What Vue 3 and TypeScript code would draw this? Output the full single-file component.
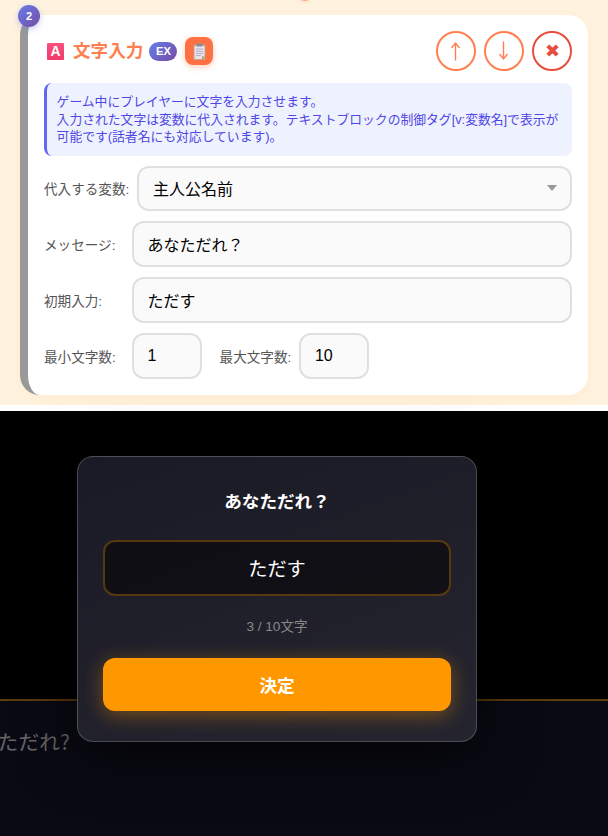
<script setup lang="ts">
import { ref } from 'vue'

const speech = ref('あなただれ?')
const prompt = ref('あなただれ？')
const initial = ref('ただす')
const minLen = ref(1)
const maxLen = ref(10)
const infoLines = [
  'ゲーム中にプレイヤーに文字を入力させます。',
  '入力された文字は変数に代入されます。テキストブロックの制御タグ[v:変数名]で表示が可能です(話者名にも対応しています)。',
]
</script>

<template>
  <div class="page">
    <section class="editor">
      <span class="connector"></span>
      <article class="card">
        <span class="step">2</span>
        <header class="head">
          <div class="head-left">
            <span class="emoji-a">A</span>
            <h2 class="title">文字入力</h2>
            <span class="ex">EX</span>
            <button class="clip" type="button" aria-label="コピー">
              <svg width="13" height="17" viewBox="0 0 13 17">
                <rect x="0.5" y="1.5" width="12" height="15.5" rx="1" fill="#c9a27c" />
                <path d="M1.5 3h10v10.5L9 16H1.5z" fill="#e8e2ee" />
                <path d="M9 16l2.5-2.5H9z" fill="#b98a5e" />
                <rect x="3.5" y="0.5" width="6" height="3" rx="0.7" fill="#8f8a96" />
                <path d="M3 6h7M3 8.2h7M3 10.4h7M3 12.6h5" stroke="#b3a9bd" stroke-width="0.9" fill="none" />
              </svg>
            </button>
          </div>
          <div class="head-right">
            <button class="round" type="button" aria-label="上へ">
              <svg width="10" height="20" viewBox="0 0 10 20">
                <path d="M4.5 19.5V2M0.5 7L4.5 2l4 5" fill="none" stroke="#ff7f50" stroke-width="1.4" />
              </svg>
            </button>
            <button class="round" type="button" aria-label="下へ">
              <svg width="10" height="20" viewBox="0 0 10 20">
                <path d="M4.5 0.5V18M0.5 13L4.5 18l4-5" fill="none" stroke="#ff7f50" stroke-width="1.4" />
              </svg>
            </button>
            <button class="round danger" type="button">✖</button>
          </div>
        </header>
        <div class="info">
          <div v-for="line in infoLines" :key="line">{{ line }}</div>
        </div>
        <div class="row">
          <label class="label">代入する変数:</label>
          <div class="field select">主人公名前<span class="caret"></span></div>
        </div>
        <div class="row">
          <label class="label wide">メッセージ:</label>
          <input class="field" v-model="prompt" />
        </div>
        <div class="row">
          <label class="label wide">初期入力:</label>
          <input class="field" v-model="initial" />
        </div>
        <div class="row last">
          <label class="label wide">最小文字数:</label>
          <input class="field num" v-model="minLen" />
          <label class="label second">最大文字数:</label>
          <input class="field num" v-model="maxLen" />
        </div>
      </article>
    </section>
    <section class="game">
      <div class="sky"></div>
      <div class="dialog">
        <p class="speech">{{ speech }}</p>
      </div>
      <div class="modal">
        <h3 class="modal-title">{{ prompt }}</h3>
        <input class="modal-input" v-model="initial" />
        <div class="count">3 / 10文字</div>
        <button class="submit" type="button">決定</button>
      </div>
    </section>
  </div>
</template>

<style>
html, body { margin: 0; background: #fff; }
</style>

<style scoped>
.page {
  width: 608px;
  height: 836px;
  overflow: hidden;
  display: flex;
  flex-direction: column;
  gap: 6px;
  font-family: "Liberation Sans", "Noto Sans CJK JP", sans-serif;
  background: #fff;
}
.editor {
  position: relative;
  height: 405px;
  box-sizing: border-box;
  padding: 15px 20px 10px;
  background: #fff3e0;
  overflow: hidden;
}
.connector {
  position: absolute;
  left: 298px;
  top: -13px;
  width: 14px;
  height: 14px;
  border-radius: 50%;
  background: #ffa98a;
  box-shadow: 0 0 4px rgba(255, 127, 80, 0.3);
}
.card {
  position: relative;
  box-sizing: border-box;
  height: 380px;
  padding: 16px;
  background: #fff;
  border-left: 8px solid #999;
  border-radius: 20px;
  box-shadow: 0 4px 16px rgba(255, 152, 0, 0.08);
}
.step {
  position: absolute;
  left: -10px;
  top: -10px;
  width: 22px;
  height: 22px;
  border-radius: 50%;
  display: flex;
  align-items: center;
  justify-content: center;
  color: #fff;
  font-size: 11px;
  font-weight: 700;
  background: linear-gradient(135deg, #667eea, #764ba2);
  box-shadow: 0 2px 6px rgba(102, 126, 234, 0.4);
}
.head {
  display: flex;
  align-items: center;
  justify-content: space-between;
  height: 40px;
  margin-bottom: 12px;
}
.head-left { display: flex; align-items: center; }
.head-right { display: flex; gap: 8px; }
.emoji-a {
  width: 17px;
  height: 17px;
  margin: 0 9px 0 3px;
  border-radius: 1px;
  background: linear-gradient(180deg, #f8527e, #f2386a);
  color: #fff;
  font-size: 14px;
  font-weight: 700;
  line-height: 17px;
  text-align: center;
}
.title {
  margin: 0;
  font-size: 17.6px;
  font-weight: 700;
  line-height: 26px;
  color: #ff7f50;
}
.ex {
  margin-left: 6px;
  width: 28px;
  height: 19px;
  border-radius: 10px;
  background: linear-gradient(135deg, #667eea, #764ba2);
  color: #fff;
  font-size: 11.2px;
  font-weight: 700;
  line-height: 18px;
  text-align: center;
}
.clip {
  margin-left: 8px;
  width: 28px;
  height: 28px;
  padding: 0;
  border: none;
  border-radius: 8px;
  background: #ff7043;
  box-shadow: 0 2px 6px rgba(255, 112, 67, 0.35);
  display: flex;
  align-items: center;
  justify-content: center;
}
.round {
  width: 40px;
  height: 40px;
  padding: 0;
  border: 2px solid #ff7f50;
  border-radius: 50%;
  background: #fff;
  color: #ff7f50;
  font-family: inherit;
  display: flex;
  align-items: center;
  justify-content: center;
}
.round.danger {
  border-color: #e74c3c;
  color: #e74c3c;
  font-size: 18px;
  line-height: 1;
}
.info {
  box-sizing: border-box;
  padding: 9.6px;
  margin-bottom: 10px;
  background: #eef2ff;
  border-left: 3px solid #6366f1;
  border-radius: 8px;
  color: #4f46e5;
  font-size: 12.8px;
  line-height: 17.92px;
}
.row {
  display: flex;
  align-items: center;
  gap: 8px;
  margin-bottom: 10px;
}
.row.last { margin-bottom: 0; }
.label {
  flex: none;
  font-size: 13.6px;
  color: #555;
}
.label.wide { min-width: 80px; }
.label.second { margin-left: 9.6px; }
.field {
  flex: 1;
  min-width: 0;
  box-sizing: border-box;
  height: 46px;
  padding: 0 13.6px;
  border: 2px solid #e0e0e0;
  border-radius: 12px;
  background: #fafafa;
  color: #000;
  font-family: inherit;
  font-size: 16px;
  outline: none;
}
.field.num { flex: none; width: 70px; }
.select {
  position: relative;
  height: 45px;
  display: flex;
  align-items: center;
}
.caret {
  position: absolute;
  right: 13px;
  top: 17px;
  width: 0;
  height: 0;
  border-left: 5px solid transparent;
  border-right: 5px solid transparent;
  border-top: 6px solid #999;
}
.game {
  position: relative;
  flex: 1;
  display: flex;
  flex-direction: column;
  background: #000;
}
.sky { height: 288px; flex: none; }
.dialog {
  flex: 1;
  border-top: 2px solid rgba(255, 152, 0, 0.35);
  background: #0a0a14;
  padding-top: 26px;
}
.speech {
  margin: 0 0 0 -44px;
  color: #666;
  font-family: "Noto Sans CJK JP", sans-serif;
  font-size: 20.8px;
  font-weight: 400;
  line-height: 28px;
  white-space: nowrap;
}
.modal {
  position: absolute;
  left: 77px;
  top: 45px;
  box-sizing: border-box;
  width: 400px;
  height: 286px;
  padding: 32px 25px 30px;
  display: flex;
  flex-direction: column;
  align-items: stretch;
  border: 1px solid rgba(255, 255, 255, 0.2);
  border-radius: 16px;
  background: linear-gradient(160deg, #1a1a26, #25252f);
  box-shadow: 0 10px 60px rgba(0, 0, 0, 0.8);
}
.modal-title {
  margin: 0 0 25px;
  color: #fff;
  font-size: 17.6px;
  font-weight: 700;
  line-height: 26px;
  text-align: center;
}
.modal-input {
  box-sizing: border-box;
  height: 56px;
  border: 2px solid rgba(255, 152, 0, 0.3);
  border-radius: 12px;
  background: rgba(0, 0, 0, 0.5);
  color: #fff;
  font-family: inherit;
  font-size: 19.2px;
  text-align: center;
  outline: none;
}
.count {
  margin-top: 21px;
  color: #888;
  font-size: 13.6px;
  line-height: 20px;
  text-align: center;
}
.submit {
  margin-top: 21px;
  height: 53px;
  border: none;
  border-radius: 12px;
  background: #ff9800;
  color: #fff;
  font-family: inherit;
  font-size: 17.6px;
  font-weight: 700;
  box-shadow: 0 4px 20px rgba(255, 152, 0, 0.4);
}
</style>
